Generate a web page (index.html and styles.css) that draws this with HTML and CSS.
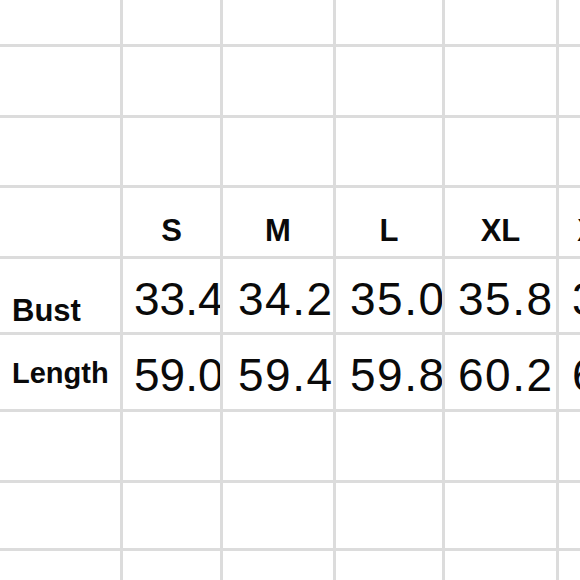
FILE: index.html
```html
<!DOCTYPE html>
<html>
<head>
<meta charset="utf-8">
<link rel="stylesheet" href="styles.css">
</head>
<body>
<div class="sheet">
  <div class="c"></div><div class="c"></div><div class="c"></div><div class="c"></div><div class="c"></div><div class="c"></div>
  <div class="c"></div><div class="c"></div><div class="c"></div><div class="c"></div><div class="c"></div><div class="c"></div>
  <div class="c"></div><div class="c"></div><div class="c"></div><div class="c"></div><div class="c"></div><div class="c"></div>
  <div class="c"></div><div class="c head">S</div><div class="c head">M</div><div class="c head">L</div><div class="c head">XL</div><div class="c head">XXL</div>
  <div class="c label bust">Bust</div><div class="c num n1 r1">33.4</div><div class="c num n2 r1">34.2</div><div class="c num n3 r1">35.0</div><div class="c num n4 r1">35.8</div><div class="c num n5 r1">36.6</div>
  <div class="c label length">Length</div><div class="c num n1 r2">59.0</div><div class="c num n2 r2">59.4</div><div class="c num n3 r2">59.8</div><div class="c num n4 r2">60.2</div><div class="c num n5 r2">60.6</div>
  <div class="c"></div><div class="c"></div><div class="c"></div><div class="c"></div><div class="c"></div><div class="c"></div>
  <div class="c"></div><div class="c"></div><div class="c"></div><div class="c"></div><div class="c"></div><div class="c"></div>
  <div class="c"></div><div class="c"></div><div class="c"></div><div class="c"></div><div class="c"></div><div class="c"></div>
</div>
</body>
</html>
```
FILE: styles.css
```css
html, body {
  margin: 0;
  padding: 0;
  width: 580px;
  height: 580px;
  overflow: hidden;
  background: #fff;
}
.sheet {
  display: grid;
  grid-template-columns: 120px 97px 110px 106px 111px 97px;
  grid-template-rows: 44px 68px 67px 68px 73px 74px 68px 65px 40px;
  gap: 3px;
  background: #dcdcdc;
  width: 660px;
  font-family: "Liberation Sans", Arial, sans-serif;
  color: #0a0a0a;
}
.c {
  background: #fff;
  display: flex;
  align-items: flex-end;
  line-height: 1;
  white-space: nowrap;
  overflow: hidden;
  min-width: 0;
}
.head {
  justify-content: center;
  font-weight: bold;
  font-size: 31px;
  padding-bottom: 10px;
  overflow: visible;
}
.label {
  font-weight: bold;
  padding-left: 12px;
}
.bust {
  font-size: 31px;
  padding-bottom: 6px;
}
.length {
  font-size: 29px;
  padding-bottom: 21px;
}
.num {
  justify-content: flex-start;
  font-size: 46px;
  letter-spacing: 1.5px;
}
.n1 {
  letter-spacing: 0;
  padding-left: 11px;
}
.n2 {
  padding-left: 15px;
}
.n3 {
  padding-left: 14px;
}
.n4 {
  padding-left: 13px;
}
.n5 {
  padding-left: 13px;
}
.r1 {
  padding-bottom: 10px;
}
.r2 {
  padding-bottom: 11px;
}
```
